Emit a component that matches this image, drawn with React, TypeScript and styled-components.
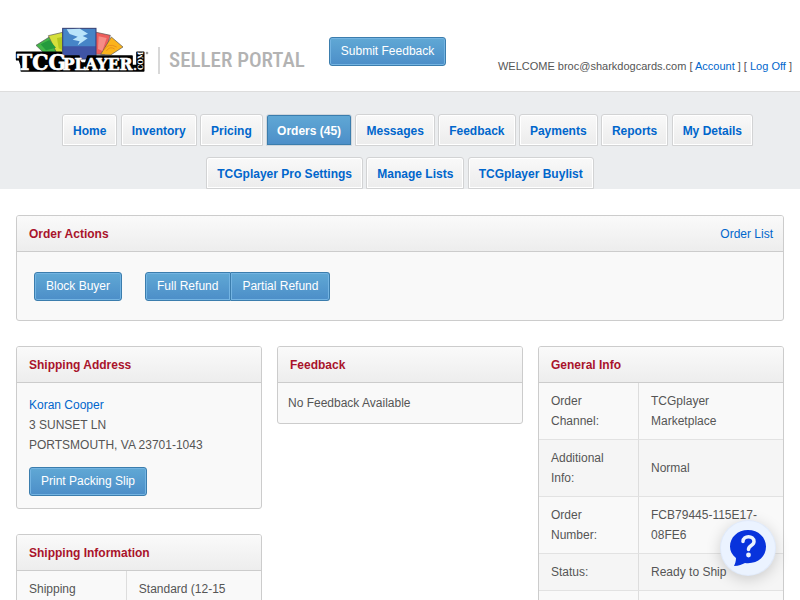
import React from 'react';
import styled, { createGlobalStyle, css } from 'styled-components';

const GlobalStyle = createGlobalStyle`
  *, *::before, *::after { box-sizing: border-box; }
  body {
    margin: 0;
    background: #fff;
    color: #555;
    font: 12px/20px "Liberation Sans", Arial, sans-serif;
  }
  a { color: #0066cc; text-decoration: none; }
`;

const Page = styled.div`
  height: 100vh;
  overflow: hidden;
`;

const Header = styled.header`
  display: flex;
  align-items: center;
  min-height: 92px;
  padding: 12px 8px 0 15px;
  border-bottom: 1px solid #ddd;
`;

const Brand = styled.a`
  display: flex;
  align-items: center;
  flex: none;
  margin-bottom: 3px;
`;

const LogoArt = styled.svg`
  overflow: visible;
`;

const Portal = styled.span`
  margin: 20px 0 0 9px;
  padding-left: 9px;
  border-left: 2px solid #d8d8d8;
  color: #b3b3b3;
  font: 500 21px/27px "Roboto Condensed", "Liberation Sans", sans-serif;
  white-space: nowrap;
`;

const Account = styled.p`
  align-self: flex-end;
  margin: 0 0 15px auto;
  font-size: 11px;
  white-space: nowrap;
`;

const Button = styled.button<{ $join?: 'left' | 'right' }>`
  height: 29px;
  padding: 3px 11px 4px;
  border: 1px solid #3b7dad;
  border-radius: 3px;
  background: linear-gradient(#60a8d5, #4c8ec8);
  box-shadow: inset 0 0 0 1px #74b4e2;
  color: #fff;
  font: 12px/20px "Liberation Sans", Arial, sans-serif;
  white-space: nowrap;
  cursor: pointer;
  ${p => p.$join === 'left' && css`padding-right: 12px; border-radius: 3px 0 0 3px;`}
  ${p => p.$join === 'right' && css`border-left: 0; border-radius: 0 3px 3px 0;`}
`;

const HeaderAction = styled.div`
  margin: 0 20px 0 24px;
`;

const Nav = styled.nav`
  padding-top: 22px;
  background: #ebedef;
`;

const TabList = styled.ul`
  margin: 0;
  padding: 0;
  list-style: none;
  text-align: center;
`;

const TabItem = styled.li`
  display: inline-block;
  vertical-align: top;
  margin-bottom: 11px;
  &:first-child { margin-left: 15px; }
  &:nth-child(n + 10) { margin-bottom: 0; }
`;

const Tab = styled.a<{ $active?: boolean }>`
  display: block;
  padding: 6px 10px 4px;
  border: 1px solid #d2d3d4;
  border-radius: 3px 3px 0 0;
  background: linear-gradient(#f9f9f9, #ececec);
  box-shadow: inset 0 0 0 1px #fff;
  font-weight: bold;
  ${p => p.$active && css`
    border-color: #cfd6dc;
    background: linear-gradient(#60a8d5, #4c8ec8);
    box-shadow: inset 0 0 0 1px #3b7dad;
    color: #fff;
  `}
`;

const Main = styled.main`
  display: grid;
  gap: 25px;
  padding: 26px 16px;
`;

const Columns = styled.div`
  display: grid;
  grid-template-columns: repeat(3, minmax(0, 1fr));
  align-items: start;
  gap: 15px;
`;

const Stack = styled.div`
  display: grid;
  gap: 25px;
`;

const PanelBox = styled.section`
  border: 1px solid #ccc;
  border-radius: 3px;
  background: #f9f9f9;
  overflow: hidden;
`;

const PanelHead = styled.div`
  display: flex;
  justify-content: space-between;
  padding: 8px 10px 7px 12px;
  border-bottom: 1px solid #ccc;
  background: linear-gradient(#fafafa, #ededed);
`;

const PanelTitle = styled.h2`
  margin: 0;
  color: #a9132b;
  font-size: 12px;
  line-height: 20px;
`;

const Actions = styled.div`
  display: flex;
  gap: 23px;
  padding: 20px 17px 19px;
`;

const Group = styled.div`
  display: flex;
`;

const Address = styled.div`
  display: grid;
  justify-items: start;
  gap: 12px;
  padding: 12px;
`;

const Lines = styled.address`
  font-style: normal;
`;

const Note = styled.p`
  margin: 0;
  padding: 10px;
`;

const Table = styled.table<{ $label: number }>`
  width: 100%;
  border-collapse: separate;
  border-spacing: 0;
  table-layout: fixed;
  th { width: ${p => p.$label}%; border-right: 1px solid #ddd; font-weight: normal; text-align: left; }
  th, td { height: 37px; padding: 8px 12px; border-bottom: 1px solid #e2e2e2; }
  tr:nth-child(even) { background: #f5f5f5; }
`;

const Help = styled.button`
  position: fixed;
  right: 25px;
  bottom: 25px;
  display: grid;
  place-items: center;
  width: 54px;
  height: 54px;
  padding: 0;
  border: 0;
  border-radius: 50%;
  background: #ebf3ff;
  box-shadow: 0 0 0 1px #e0eafa, 0 3px 16px rgba(0, 0, 0, 0.2);
  cursor: pointer;
`;

function Logo() {
  const face = { fontFamily: '"DejaVu Serif Condensed", "DejaVu Serif", serif', fontWeight: 'bold' };
  return (
    <LogoArt width="134" height="46" viewBox="45 36 402 138" role="img" aria-label="TCGplayer.com">
      <g stroke="#555" strokeWidth="2">
        <path d="M108 91L148 66L200 112L140 122Z" fill="#43b649" />
        <path d="M145 62L188 52L194 116L172 118Z" fill="#d5df3b" />
        <path d="M285 51L331 61L314 118L284 118Z" fill="#ee5d5b" />
        <path d="M334 66L369 96L332 120L302 118Z" fill="#fbb31c" />
      </g>
      <path d="M122 88L148 75L168 98L138 106Z" fill="#249a3d" />
      <path d="M171 69L187 66V105L176 100Z" fill="#b4c71f" />
      <path d="M296 64L320 69L307 108L294 102Z" fill="#f58d87" />
      <path d="M312 105Q325 82 350 96M319 108Q329 92 344 102" fill="none" stroke="#e9911a" strokeWidth="3" />
      <rect x="188" y="40" width="100" height="92" fill="#3f54a5" stroke="#354274" strokeWidth="3" />
      <path d="M190 42H286V94H190Z" fill="#4685c7" />
      <path d="M200 43L240 41L264 56L248 63L263 70L233 91L239 79L218 74L233 65L209 57Z" fill="#b9e4fa" />
      <path
        d="M50 112H184V123H237V134L244 144H257L264 123H396V152H411V112H431V168H64V152L58 134H50Z"
        fill="#000" stroke="#000" strokeWidth="5" strokeLinejoin="round"
      />
      <g {...face} fill="#fff" stroke="#fff" strokeWidth="2" strokeLinejoin="round">
        <text x="51" y="165" fontSize="68">TCG</text>
        <text x="188" y="165" fontSize="52">PLAYER</text>
        <text x="400" y="165" fontSize="34" strokeWidth="1">.</text>
        <text transform="translate(430 165) rotate(-90)" fontSize="22" strokeWidth="0">COM</text>
      </g>
      <circle cx="441" cy="114" r="3" fill="#aaa" stroke="#555" />
    </LogoArt>
  );
}

function HelpIcon() {
  return (
    <svg width="38" height="38" viewBox="0 0 38 38" aria-hidden="true">
      <path d="M19 1C8.500 1 1 8.500 1 17.500C1 22 3 26 7 29C7 32 6 35 5 37C10 37 13 35.500 16 34C28 35.500 37 28 37 17.500C37 8.500 29.500 1 19 1Z" fill="#0833dc" />
      <path d="M14 12.500C14 6 25 6 25 12.500C25 17 19.500 16 19.500 20.500" fill="none" stroke="#ebf3ff" strokeWidth="3.500" strokeLinecap="round" />
      <circle cx="19.500" cy="26" r="2.400" fill="#ebf3ff" />
    </svg>
  );
}

function Panel({ title, action, children }: { title: string; action?: React.ReactNode; children: React.ReactNode }) {
  return (
    <PanelBox>
      <PanelHead>
        <PanelTitle>{title}</PanelTitle>
        {action}
      </PanelHead>
      {children}
    </PanelBox>
  );
}

function InfoTable({ rows, label }: { rows: string[][]; label: number }) {
  return (
    <Table $label={label}>
      <tbody>
        {rows.map(([name, value], i) => (
          <tr key={i}>
            <th scope="row">{name}</th>
            <td>{value}</td>
          </tr>
        ))}
      </tbody>
    </Table>
  );
}

const tabs = [
  'Home', 'Inventory', 'Pricing', 'Orders (45)', 'Messages', 'Feedback', 'Payments',
  'Reports', 'My Details', 'TCGplayer Pro Settings', 'Manage Lists', 'TCGplayer Buylist',
];

const generalInfo = [
  ['Order Channel:', 'TCGplayer Marketplace'],
  ['Additional Info:', 'Normal'],
  ['Order Number:', 'FCB79445-115E17-08FE6'],
  ['Status:', 'Ready to Ship'],
  ['', ''],
];

export default function App() {
  return (
    <Page>
      <GlobalStyle />
      <Header>
        <Brand href="#">
          <Logo />
          <Portal>SELLER PORTAL</Portal>
        </Brand>
        <HeaderAction>
          <Button type="button">Submit Feedback</Button>
        </HeaderAction>
        <Account>
          WELCOME broc@sharkdogcards.com [ <a href="#">Account</a> ] [ <a href="#">Log Off</a> ]
        </Account>
      </Header>
      <Nav>
        <TabList>
          {tabs.map(tab => (
            <React.Fragment key={tab}>
              <TabItem>
                <Tab href="#" $active={tab.startsWith('Orders')}>{tab}</Tab>
              </TabItem>{' '}
            </React.Fragment>
          ))}
        </TabList>
      </Nav>
      <Main>
        <Panel title="Order Actions" action={<a href="#">Order List</a>}>
          <Actions>
            <Button type="button">Block Buyer</Button>
            <Group>
              <Button type="button" $join="left">Full Refund</Button>
              <Button type="button" $join="right">Partial Refund</Button>
            </Group>
          </Actions>
        </Panel>
        <Columns>
          <Stack>
            <Panel title="Shipping Address">
              <Address>
                <Lines>
                  <a href="#">Koran Cooper</a><br />
                  3 SUNSET LN<br />
                  PORTSMOUTH, VA 23701-1043
                </Lines>
                <Button type="button">Print Packing Slip</Button>
              </Address>
            </Panel>
            <Panel title="Shipping Information">
              <InfoTable label={45} rows={[['Shipping', 'Standard (12-15']]} />
            </Panel>
          </Stack>
          <Panel title="Feedback">
            <Note>No Feedback Available</Note>
          </Panel>
          <Panel title="General Info">
            <InfoTable label={41} rows={generalInfo} />
          </Panel>
        </Columns>
      </Main>
      <Help type="button" aria-label="Help">
        <HelpIcon />
      </Help>
    </Page>
  );
}
